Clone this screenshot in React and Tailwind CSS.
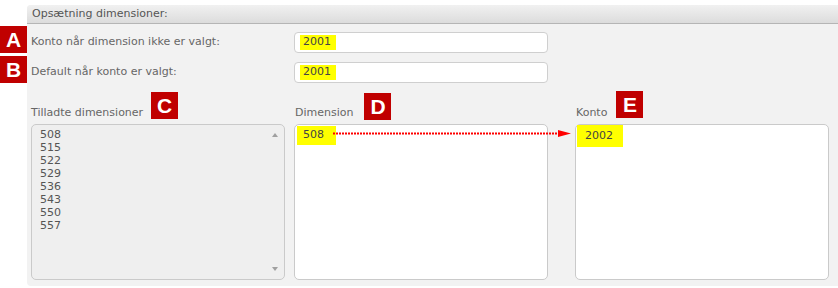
const allowed = ["508", "515", "522", "529", "536", "543", "550", "557"];

const Badge = ({ letter, className = "" }) => (
  <span
    className={`flex h-[27px] w-[27px] items-center justify-center bg-[#c00000] text-[21px] font-bold leading-none text-white ${className}`}
    style={{ fontFamily: "'Liberation Sans', Arial, sans-serif" }}
  >
    {letter}
  </span>
);

const ValueInput = ({ value }) => (
  <div className="flex h-[21px] w-[254px] items-center rounded-[4px] border border-[#cfcfcf] bg-white pl-[5px]">
    <span className="flex h-[15px] w-[36px] items-center bg-[#ffff00] pl-[3px] text-[#444]">{value}</span>
  </div>
);

const Arrow = () => (
  <svg className="absolute left-[302px] top-[6px]" width="240" height="8" viewBox="0 0 240 8">
    <line x1="0" y1="3.5" x2="226" y2="3.5" stroke="#ff0000" strokeWidth="2" strokeDasharray="2 1" />
    <polygon points="225,0 238,3.5 225,7" fill="#ff0000" />
  </svg>
);

export default function App() {
  return (
    <div
      className="relative h-[288px] w-[838px] overflow-hidden bg-white pl-[27px] pt-[5px] text-[11px] text-[#666]"
      style={{ fontFamily: "'DejaVu Sans', Verdana, sans-serif" }}
    >
      <Badge letter="A" className="absolute left-0 top-[26px]" />
      <Badge letter="B" className="absolute left-0 top-[56px]" />

      <div className="w-[830px] rounded-[4px] bg-[#f2f2f2] pb-[6px]">
        <div className="flex h-[19px] items-center rounded-t-[4px] border-b border-[#b5b5b5] bg-gradient-to-b from-[#f1f1f1] to-[#dcdcdc] pl-[5px] text-[#555]">
          Opsætning dimensioner:
        </div>

        <div className="px-[4px]">
          <div className="mt-[8px] flex items-center">
            <span className="w-[263px]">Konto når dimension ikke er valgt:</span>
            <ValueInput value="2001" />
          </div>
          <div className="mt-[9px] flex items-center">
            <span className="w-[263px]">Default når konto er valgt:</span>
            <ValueInput value="2001" />
          </div>

          <div className="mt-[9px] flex h-[28px]">
            <div className="flex w-[263px] items-start">
              <span className="mt-[14px] leading-[14px]">Tilladte dimensioner</span>
              <Badge letter="C" className="ml-[8px]" />
            </div>
            <div className="flex w-[281px] items-start">
              <span className="ml-[1px] mt-[14px] leading-[14px]">Dimension</span>
              <Badge letter="D" className="ml-[11px] mt-[1px]" />
            </div>
            <div className="flex items-start">
              <span className="ml-[1px] mt-[14px] leading-[14px]">Konto</span>
              <Badge letter="E" className="ml-[9px] mt-[-1px]" />
            </div>
          </div>

          <div className="relative mt-[4px] flex">
            <div className="relative h-[156px] w-[254px] rounded-[5px] border border-[#cacaca] bg-[#efefef] pl-[8px] pt-[3px] leading-[13px] text-[#555]">
              {allowed.map((d) => (
                <div key={d}>{d}</div>
              ))}
              <span className="absolute right-[6px] top-[8px] h-0 w-0 border-x-[3.5px] border-b-[4px] border-x-transparent border-b-[#a0a0a0]" />
              <span className="absolute bottom-[8px] right-[6px] h-0 w-0 border-x-[3.5px] border-t-[4px] border-x-transparent border-t-[#a0a0a0]" />
            </div>
            <div className="ml-[9px] h-[156px] w-[254px] rounded-[5px] border border-[#cacaca] bg-white pl-[2px] pt-[1px]">
              <span className="flex h-[19px] w-[39px] items-center bg-[#ffff00] pl-[6px] text-[#444]">508</span>
            </div>
            <div className="ml-[27px] h-[156px] w-[254px] rounded-[5px] border border-[#cacaca] bg-white pl-[1px]">
              <span className="flex h-[22px] w-[46px] items-center bg-[#ffff00] pl-[8px] text-[#444]">2002</span>
            </div>
            <Arrow />
          </div>
        </div>
      </div>
    </div>
  );
}
